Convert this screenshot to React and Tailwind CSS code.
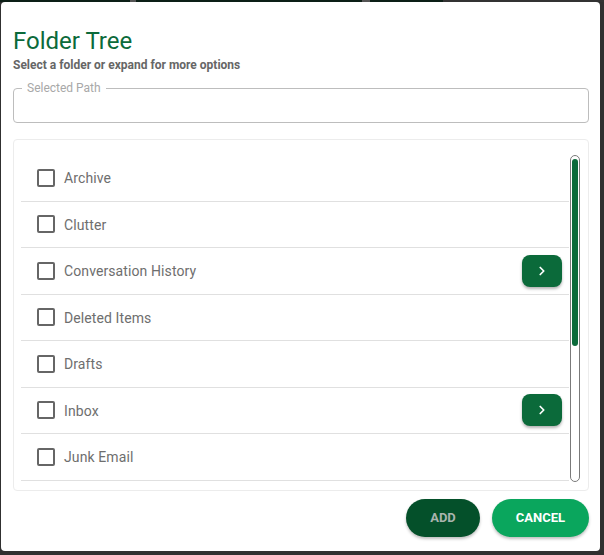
import { ChevronRight } from 'lucide-react'

// Folders visible in the tree; the ones with children get an expand button
const FOLDERS = [
  { name: 'Archive' },
  { name: 'Clutter' },
  { name: 'Conversation History', expandable: true },
  { name: 'Deleted Items' },
  { name: 'Drafts' },
  { name: 'Inbox', expandable: true },
  { name: 'Junk Email' },
]

function FolderRow({ name, expandable }) {
  return (
    <div className="flex items-center h-[46.5px] shrink-0 border-b border-[#e0e0e0] pl-[16px] pr-[7px]">
      <span className="w-[18px] h-[18px] border-2 border-[#666666] rounded-[2px] shrink-0" />
      <span className="ml-[9px] pt-[2px] text-[14px] text-[#6e6e6e] tracking-[0.1px] flex-1">{name}</span>
      {expandable && (
        <button className="w-[40px] h-[32px] rounded-[8px] bg-[#0b6a3a] text-white flex items-center justify-center shadow-[0_2px_3px_rgba(0,0,0,0.3)]">
          <ChevronRight size={14} strokeWidth={3} />
        </button>
      )}
    </div>
  )
}

export default function App() {
  return (
    <div className="w-[604px] h-[555px] bg-[#303030] flex flex-col font-['Roboto',sans-serif] overflow-hidden">
      {/* backdrop peeking above the dialog */}
      <div className="flex h-[2px] shrink-0">
        <div className="w-[130px] bg-[#0c1f16]" />
        <div className="w-[6px] bg-[#555555]" />
        <div className="w-[226px] bg-[#0c1f16]" />
        <div className="w-[8px] bg-[#555555]" />
        <div className="w-[73px] bg-[#0c1f16]" />
        <div className="flex-1 bg-[#333333]" />
      </div>

      <div className="ml-[1px] w-[599px] h-[549px] bg-white rounded-[4px] pl-[12px] flex flex-col">
        {/* Header */}
        <h2 className="mt-[25px] text-[24px] leading-[28px] text-[#0b6a3a] font-normal">Folder Tree</h2>
        <p className="mt-[2px] text-[12px] leading-[16px] font-bold text-[#666666]">Select a folder or expand for more options</p>

        {/* Selected path field */}
        <fieldset className="mt-[9px] w-[576px] h-[41px] border border-[#bdbdbd] rounded-[4px] px-[8px]">
          <legend className="px-[5px] text-[12px] leading-[12px] text-[#a8a8a8]">Selected Path</legend>
        </fieldset>

        {/* Folder list */}
        <div className="mt-[16px] w-[576px] h-[352px] border border-[#ececec] rounded-[4px] flex pt-[15px] pl-[7px] overflow-hidden">
          <div className="flex-1 flex flex-col h-[327px]">
            {FOLDERS.map((f) => (
              <FolderRow key={f.name} {...f} />
            ))}
          </div>
          {/* scrollbar */}
          <div className="w-[10px] h-[327px] ml-[1px] mr-[8px] border border-[#7a7a7a] rounded-full p-[1px] flex flex-col">
            <div className="mt-[2px] h-[187px] bg-[#0b6a3a] rounded-full" />
          </div>
        </div>

        {/* Actions */}
        <div className="mt-[8px] w-[576px] flex justify-end gap-[12px]">
          <button className="w-[74px] h-[38px] rounded-full bg-[#04502a] text-[#a9b4ae] text-[13px] font-bold shadow-[0_2px_3px_rgba(0,0,0,0.25)]">
            ADD
          </button>
          <button className="w-[97px] h-[38px] rounded-full bg-[#0aa65d] text-white text-[13px] font-bold shadow-[0_2px_3px_rgba(0,0,0,0.25)]">
            CANCEL
          </button>
        </div>
      </div>
    </div>
  )
}
